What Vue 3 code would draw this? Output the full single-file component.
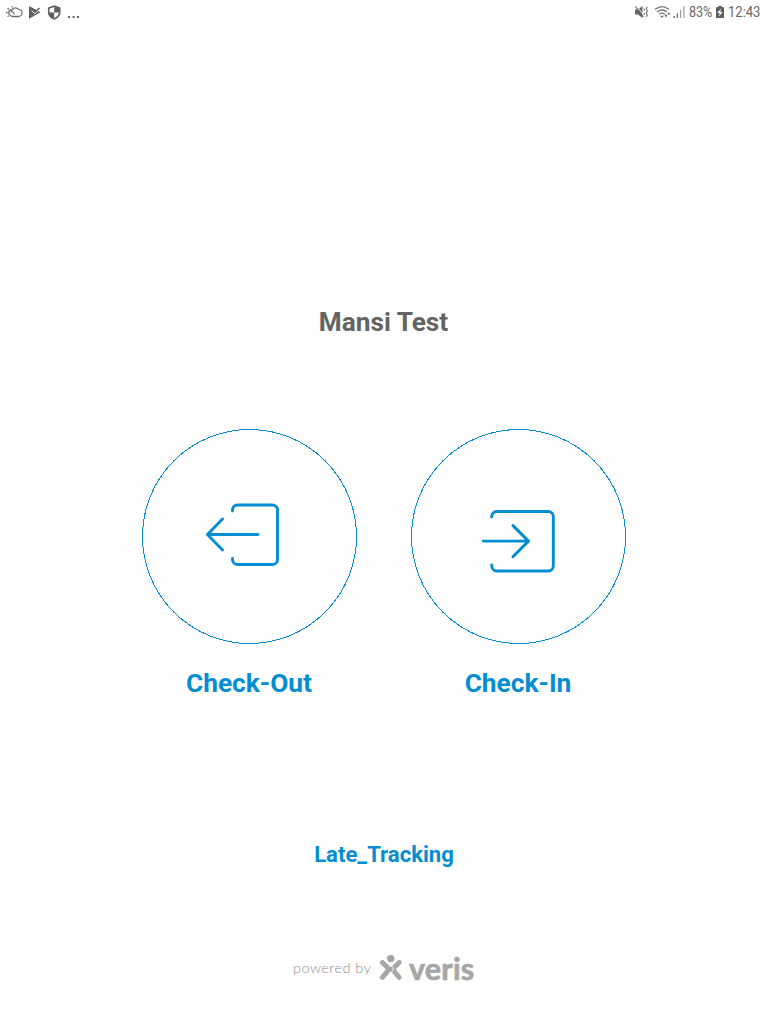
<script setup>
const actions = [
  {
    label: 'Check-Out',
    kind: 'out',
    paths: ['M90.500 82v-1a5 5 0 0 1 5-5h35a5 5 0 0 1 5 5v49.500a5 5 0 0 1-5 5h-35a5 5 0 0 1-5-5v-1', 'M116 105.500H65.500M80.500 90L65.500 105.500l15 15.500'],
  },
  {
    label: 'Check-In',
    kind: 'in',
    paths: ['M80.700 88v-.5a5 5 0 0 1 5-5H137.300a5 5 0 0 1 5 5v49.500a5 5 0 0 1-5 5H85.700a5 5 0 0 1-5-5v-1', 'M72.300 112.100H117.500M102 96.600L117.500 112.100l-15.500 15.500'],
  },
]
</script>

<template>
  <div class="screen">
    <header class="status">
      <div class="left">
        <svg width="84" height="24" viewBox="0 0 84 24">
          <g fill="none" stroke="#707070" stroke-width="1.300" stroke-linecap="round">
            <path d="M12.500 16.500h5.800a3.200 3.200 0 0 0 .2-7.200a4.100 4.100 0 0 0-7.200 2.400a2.200 2.200 0 0 1 2.700 2.200" />
            <path d="M10.500 9.800a3 3 0 0 0-1 4.700q1 1.500 2.500 1.800" />
            <path d="M6.500 12.500h.7M8 8.500l.6.600M12 6.600v.4M8 16.400l.5-.5" />
          </g>
          <path fill="#5f5f5f" d="M29 6l11.500 6.300L29 18.700z" />
          <path d="M31.500 10.500l3.300 3.300l5.700-5.500" fill="none" stroke="#fff" stroke-width="1" />
          <path d="M32 9.500l2.900 2.700l4.600-4.200" fill="none" stroke="#5f5f5f" stroke-width="1.600" />
          <path fill="#5f5f5f" d="M54.200 5.200l6.300 2.300v4.800c0 3.500-2.500 6.200-6.300 7.400c-3.800-1.200-6.300-3.900-6.300-7.400V7.500z" />
          <path fill="#fff" d="M54.200 7v5.500h4.700c-.3 2.500-2 4.200-4.700 5.400v-5.400h-4.700V8.700z" />
          <path fill="#666" d="M68 16h2v2h-2zM72.500 16h2v2h-2zM77 16h2v2h-2z" />
        </svg>
      </div>
      <div class="right">
        <svg width="52" height="24" viewBox="634 0 52 24">
          <path fill="#666" d="M635 9.500h3l4.500-3.500v12L638 14.500h-3z" />
          <path d="M636.500 6l8 10" stroke="#fff" stroke-width="1" />
          <path d="M635.500 6.500l8 10.500" fill="none" stroke="#666" stroke-width="1.200" />
          <path d="M644.300 8.500v2M644.300 13v2M647.300 7l-1 2l1 2l-1 2l1 2l-1 2" fill="none" stroke="#777" stroke-width="1.200" />
          <path d="M655 9.500q7-5.700 14 0M657 12q5-4 10 0M659.200 14.300q2.800-2.400 5.600 0" fill="none" stroke="#777" stroke-width="1.300" />
          <path fill="#666" d="M660.200 15.700h3.600L662 17.900zM667.300 14.500l1.700-2.300l1.700 2.300zM664.500 14.800h2.800l-1.400 3z" />
          <path fill="#777" d="M673.500 16h1.400v2h-1.400zM676.700 13.200h1.300V18h-1.300z" />
          <path fill="#999" d="M680 10h1.200v8H680zM683.300 6.500h1.200V18h-1.200z" />
        </svg>
        <span class="pct">83%</span>
        <svg class="batt" width="8" height="24" viewBox="0 0 8 24">
          <path fill="#5f5f5f" d="M2.200 6h3.600v1.200H8V18H0V7.200h2.200z" />
          <path fill="#fff" d="M4.800 8.500L1.500 13h2.100l-.5 3.500L6.500 12H4.400z" />
        </svg>
        <span class="time">12:43</span>
      </div>
    </header>

    <h1 class="title">Mansi Test</h1>

    <main class="actions">
      <div v-for="a in actions" :key="a.kind" class="action">
        <svg width="215" height="215" viewBox="0 0 215 215">
          <circle cx="107.500" cy="107.500" r="107" fill="none" stroke="#058dd2" shape-rendering="crispEdges" />
          <path v-for="p in a.paths" :key="p" :d="p" fill="none" stroke="#058dd2" stroke-width="2.900" stroke-linecap="round" stroke-linejoin="round" />
        </svg>
        <span class="label">{{ a.label }}</span>
      </div>
    </main>

    <div class="late">Late_Tracking</div>

    <footer class="brand">
      <span class="powered">powered by</span>
      <svg width="24" height="28" viewBox="0 0 24 28">
        <circle cx="11.800" cy="4.600" r="3.700" fill="#a6a6a6" />
        <g fill="none" stroke="#a6a6a6" stroke-width="5" stroke-linecap="round" stroke-linejoin="round">
          <path d="M3.400 8.500L10.300 15.200L3.400 23.300" />
          <path d="M20.200 8.500L13.300 15.200L20.200 23.300" />
        </g>
        <path d="M12.600 11.500q3.200 3.500 0 7" fill="none" stroke="#fff" stroke-width=".8" />
      </svg>
      <span class="veris">veris</span>
    </footer>
  </div>
</template>

<style scoped>
.screen {
  width: 768px;
  height: 1024px;
  overflow: hidden;
  background: #fff;
  font-family: Roboto, sans-serif;
  display: flex;
  flex-direction: column;
  align-items: center;
}
svg { display: block; flex: none; }
.status {
  width: 768px;
  height: 24px;
  display: flex;
  justify-content: space-between;
  color: #666;
  font-size: 15.500px;
  line-height: 25px;
}
.right { display: flex; width: 134px; }
.pct,
.time {
  transform: scaleX(.84);
  transform-origin: left center;
  white-space: nowrap;
}
.pct { width: 27px; margin-left: 3px; transform: scaleX(.81); }
.time { margin-left: 4px; }
.title {
  margin: 282px 1px 0 0;
  height: 32px;
  line-height: 32px;
  font-size: 26.200px;
  font-weight: 700;
  color: #636363;
}
.actions {
  margin-top: 91px;
  display: flex;
  gap: 54px;
}
.action {
  width: 215px;
  display: flex;
  flex-direction: column;
  align-items: center;
}
.label {
  margin: 23px 1px 0 0;
  height: 32px;
  line-height: 32px;
  font-size: 26.300px;
  font-weight: 700;
  color: #058dd2;
}
.late {
  margin-top: 141px;
  height: 28px;
  line-height: 28px;
  font-size: 22.100px;
  font-weight: 700;
  color: #058dd2;
}
.brand {
  margin-top: 86px;
  width: 182px;
  display: flex;
  height: 28px;
  color: #a6a6a6;
}
.powered {
  width: 86px;
  font: 300 14.500px/28px Lato, sans-serif;
  letter-spacing: .45px;
  white-space: nowrap;
  color: #8c8c8c;
}
.veris {
  margin-left: 6px;
  font: 700 30.500px/29px Lato, sans-serif;
  letter-spacing: .2px;
  -webkit-text-stroke: .7px #a6a6a6;
}
</style>
